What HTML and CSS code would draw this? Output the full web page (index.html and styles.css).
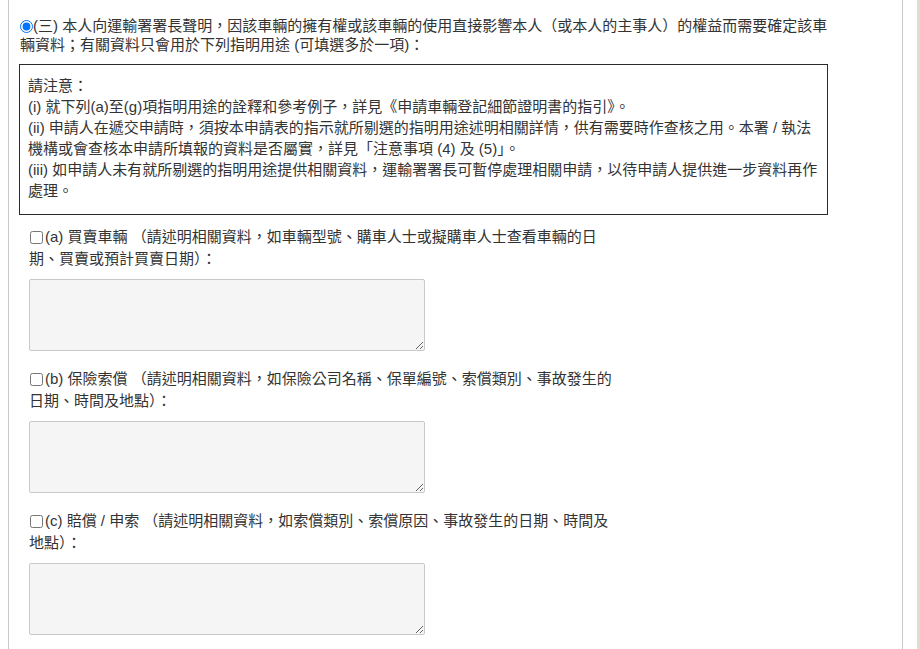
FILE: index.html
```html
<!DOCTYPE html>
<html lang="zh-Hant">
<head>
    <meta charset="UTF-8">
    <meta name="viewport" content="width=device-width, initial-scale=1.0">
    <title>申請車輛登記細節證明書</title>
    <link rel="stylesheet" href="styles.css">
</head>
<body>
    <div class="frame">
        <main class="panel">
            <section class="purpose">
                <!-- Declaration option (三) -->
                <p class="declare"><input type="radio" name="declare" checked>(三) 本人向運輸署署長聲明，因該車輛的擁有權或該車輛的使用直接影響本人（或本人的主事人）的權益而需要確定該車輛資料；有關資料只會用於下列指明用途 (可填選多於一項)：</p>

                <div class="notice">
                    <p>請注意：</p>
                    <p>(i) 就下列(a)至(g)項指明用途的詮釋和參考例子，詳見《申請車輛登記細節證明書的指引》。</p>
                    <p>(ii) 申請人在遞交申請時，須按本申請表的指示就所剔選的指明用途述明相關詳情，供有需要時作查核之用。本署 / 執法機構或會查核本申請所填報的資料是否屬實，詳見「注意事項 (4) 及 (5)」。</p>
                    <p>(iii) 如申請人未有就所剔選的指明用途提供相關資料，運輸署署長可暫停處理相關申請，以待申請人提供進一步資料再作處理。</p>
                </div>

                <!-- Specified purposes -->
                <div class="uses">
                    <div class="use">
                        <label><input type="checkbox" name="use-a">(a) 買賣車輛 （請述明相關資料，如車輛型號、購車人士或擬購車人士查看車輛的日期、買賣或預計買賣日期）：</label>
                        <textarea name="detail-a"></textarea>
                    </div>
                    <div class="use">
                        <label><input type="checkbox" name="use-b">(b) 保險索償 （請述明相關資料，如保險公司名稱、保單編號、索償類別、事故發生的日期、時間及地點）：</label>
                        <textarea name="detail-b"></textarea>
                    </div>
                    <div class="use">
                        <label><input type="checkbox" name="use-c">(c) 賠償 / 申索 （請述明相關資料，如索償類別、索償原因、事故發生的日期、時間及地點）：</label>
                        <textarea name="detail-c"></textarea>
                    </div>
                </div>
            </section>
        </main>
        <div class="edge"></div>
    </div>
</body>
</html>
```

FILE: styles.css
```css
html, body {
    margin: 0;
    padding: 0;
    height: 100%;
}

body {
    font-family: "Liberation Sans", "Noto Sans CJK TC", sans-serif;
    font-size: 15px;
    color: #333333;
    background-color: #ffffff;
    overflow: hidden;
}

.frame {
    display: flex;
    justify-content: space-between;
    height: 100vh;
}

.panel {
    box-sizing: border-box;
    width: 895px;
    margin-left: 8px;
    padding: 16px 0 0 10px;
    border-left: 1px solid #c8c8c8;
    border-right: 1px solid #c8c8c8;
}

.edge {
    width: 3px;
    background-color: #e0ddc8;
}

.purpose {
    width: 809px;
}

.declare {
    margin: 0 -8px 10px 0;
    padding-left: 1px;
    line-height: 19px;
}

.declare input {
    width: 13px;
    height: 13px;
    margin: 0;
    vertical-align: -2px;
}

.notice {
    border: 1px solid #2b2b2b;
    padding: 10px 8px 13px;
    line-height: 21px;
}

.notice p {
    margin: 0;
}

.uses {
    margin-top: 11px;
    padding-left: 10px;
}

.use label {
    display: block;
    width: 592px;
    line-height: 22px;
}

.use input {
    width: 13px;
    height: 13px;
    margin: 0 2px 0 1px;
    vertical-align: -2px;
}

.use textarea {
    display: block;
    box-sizing: border-box;
    width: 396px;
    height: 72px;
    margin: 9px 0 17px;
    background-color: #f5f5f5;
    border: 1px solid #c9c9c9;
    border-radius: 2px;
}
```
